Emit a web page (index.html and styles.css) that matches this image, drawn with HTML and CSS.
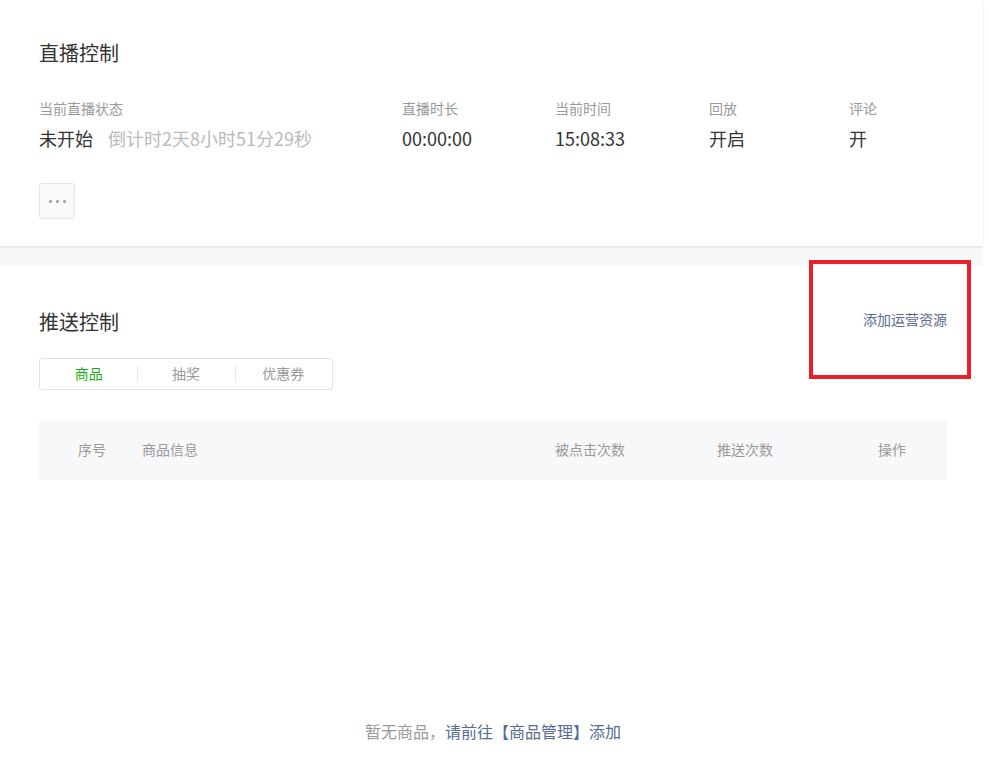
FILE: index.html
```html
<!DOCTYPE html>
<html lang="zh-CN">

<head>
    <meta charset="UTF-8">
    <meta name="viewport" content="width=device-width, initial-scale=1.0">
    <title>直播控制</title>
    <link rel="stylesheet" href="styles.css">
</head>

<body>

    <div class="page">
        <!-- 直播控制 -->
        <div class="card live-card">
            <h2 class="card-title">直播控制</h2>

            <div class="stats">
                <div class="stat">
                    <div class="stat-label">当前直播状态</div>
                    <div class="stat-value">未开始<span class="countdown">倒计时2天8小时51分29秒</span></div>
                </div>
                <div class="stat">
                    <div class="stat-label">直播时长</div>
                    <div class="stat-value">00:00:00</div>
                </div>
                <div class="stat">
                    <div class="stat-label">当前时间</div>
                    <div class="stat-value">15:08:33</div>
                </div>
                <div class="stat">
                    <div class="stat-label">回放</div>
                    <div class="stat-value">开启</div>
                </div>
                <div class="stat">
                    <div class="stat-label">评论</div>
                    <div class="stat-value">开</div>
                </div>
            </div>

            <button type="button" class="more-btn"><span></span><span></span><span></span></button>
        </div>

        <!-- 推送控制 -->
        <div class="card push-card">
            <div class="push-head">
                <h2 class="card-title">推送控制</h2>
                <a class="add-link" href="#">添加运营资源</a>
            </div>

            <div class="tabs">
                <div class="tab active">商品</div>
                <div class="tab">抽奖</div>
                <div class="tab">优惠券</div>
            </div>

            <div class="table-head">
                <div class="col-index">序号</div>
                <div class="col-info">商品信息</div>
                <div class="col-center">被点击次数</div>
                <div class="col-center">推送次数</div>
                <div class="col-center">操作</div>
            </div>

            <p class="empty">暂无商品，<a href="#">请前往【商品管理】添加</a></p>
        </div>
    </div>

    <!-- 标注框 -->
    <div class="highlight"></div>

</body>

</html>
```

FILE: styles.css
```css
/* Reset básico */
* {
    margin: 0;
    padding: 0;
    box-sizing: border-box;
    font-family: "Noto Sans CJK SC", "Liberation Sans", sans-serif;
}

body {
    background: #fff;
    position: relative;
}

.page {
    width: 983px;
    background: #f7f8fa;
}

.card {
    background: #fff;
}

.card-title {
    font-size: 20px;
    line-height: 28px;
    font-weight: normal;
    color: #333;
}

/* 直播控制 */
.live-card {
    padding: 39px 36px 27px 39px;
    box-shadow: 0 1px 2px rgba(0, 0, 0, 0.12);
    margin-bottom: 20px;
}

.stats {
    display: grid;
    grid-template-columns: 363px 153px 154px 140px auto;
    margin-top: 32px;
}

.stat-label {
    font-size: 14px;
    line-height: 18px;
    color: #999;
}

.stat-value {
    margin-top: 8px;
    font-size: 18px;
    line-height: 26px;
    color: #333;
}

.countdown {
    margin-left: 15px;
    color: #bbb;
}

.more-btn {
    display: flex;
    align-items: center;
    justify-content: center;
    gap: 4px;
    width: 36px;
    height: 36px;
    margin-top: 32px;
    background: #fafafa;
    border: 1px solid #e6e6e6;
    border-radius: 3px;
    cursor: pointer;
}

.more-btn span {
    width: 3px;
    height: 3px;
    border-radius: 50%;
    background: #999;
}

/* 推送控制 */
.push-card {
    padding: 42px 36px 30px 39px;
    min-height: 510px;
}

.push-head {
    display: flex;
    justify-content: space-between;
    align-items: center;
}

.add-link {
    font-size: 14px;
    line-height: 20px;
    color: #576b95;
    text-decoration: none;
    margin-top: -6px;
}

.tabs {
    display: flex;
    width: 294px;
    height: 32px;
    margin-top: 22px;
    border: 1px solid #e3e3e3;
    border-radius: 3px;
}

.tab {
    position: relative;
    flex: 1;
    text-align: center;
    font-size: 14px;
    line-height: 28px;
    color: #999;
    cursor: pointer;
}

.tab + .tab::before {
    content: "";
    position: absolute;
    left: 0;
    top: 7px;
    height: 16px;
    border-left: 1px solid #e6e6e6;
}

.tab.active {
    color: #1aad19;
}

.table-head {
    display: grid;
    grid-template-columns: 103px 385px 126px 184px 110px;
    align-items: center;
    height: 60px;
    padding-bottom: 2px;
    margin-top: 30px;
    background: #f7f8fa;
    font-size: 14px;
    color: #999;
}

.col-index {
    text-align: center;
    padding-left: 3px;
}

.col-center {
    text-align: center;
}

.empty {
    margin-top: 240px;
    text-align: center;
    font-size: 16px;
    line-height: 22px;
    color: #999;
}

.empty a {
    color: #576b95;
    text-decoration: none;
}

/* Anotação */
.highlight {
    position: absolute;
    left: 809px;
    top: 260px;
    width: 162px;
    height: 119px;
    border: 4px solid #e8202a;
}
```
